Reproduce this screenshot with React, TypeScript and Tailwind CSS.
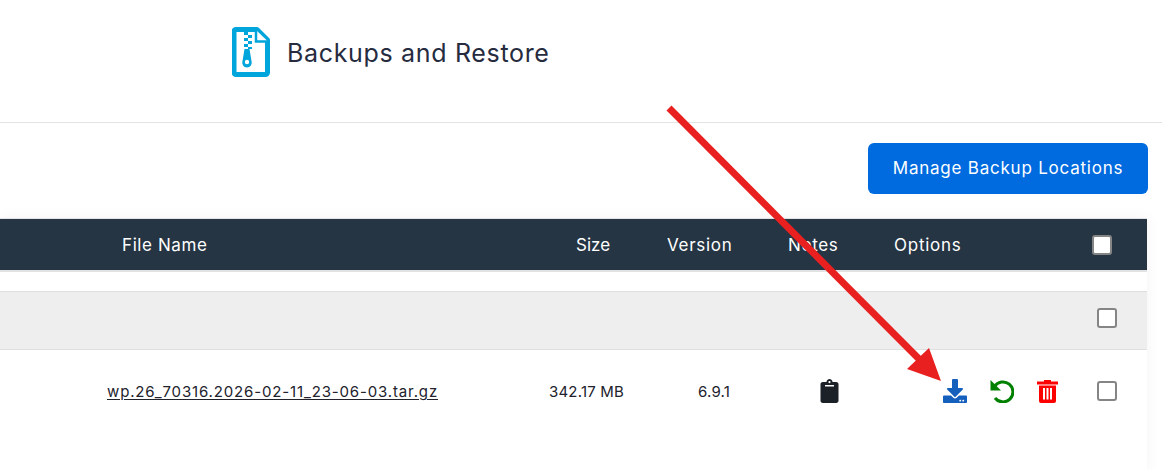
import { FaClipboard, FaDownload } from "react-icons/fa";

function ZipIcon() {
  return (
    <svg width="38" height="50" viewBox="0 0 38 50" className="shrink-0">
      <path d="M4 2.500H25L35.500 13V45.500a2 2 0 0 1-2 2H4a2 2 0 0 1-2-2V4.500a2 2 0 0 1 2-2Z" fill="#fff" stroke="#00a5dc" strokeWidth="5" strokeLinejoin="round" />
      <path d="M24 3V14.500H36" fill="#fff" stroke="#00a5dc" strokeWidth="2.500" />
      <path d="M12 5h4v3h-4zM16 8h4v3h-4zM12 11h4v3h-4zM16 14h4v3h-4zM12 17h4v3h-4zM16 20h4v2h-4z" fill="#00a5dc" />
      <path d="M12.500 22h5l2 12a4.800 4.800 0 1 1-9 0Z" fill="#00a5dc" />
      <circle cx="15" cy="35" r="2.200" fill="#fff" />
    </svg>
  );
}

function UndoIcon() {
  return (
    <svg width="24" height="24" viewBox="0 0 24 24" className="shrink-0">
      <path d="M4.500 7.500A10 10 0 1 1 5 19" fill="none" stroke="#008000" strokeWidth="3" />
      <path d="M0.500 1V11.500H11Z" fill="#008000" />
    </svg>
  );
}

function TrashIcon() {
  return (
    <svg width="21" height="24" viewBox="0 0 21 24" className="shrink-0">
      <path d="M7 1h7v2H7z" fill="#ff0000" />
      <path d="M0 2.500h21v3H0z" fill="#ff0000" />
      <path d="M2 6.500h17V22a2 2 0 0 1-2 2H4a2 2 0 0 1-2-2Z" fill="#ff0000" />
      <path d="M6 9h2v11.500H6zM9.500 9h2v11.500h-2zM13 9h2v11.500h-2z" fill="#fff" />
    </svg>
  );
}

function Box() {
  return <span className="block size-[20px] rounded-[3px] border-2 border-[#858585] bg-white" />;
}

export default function App() {
  return (
    <div className="relative h-[470px] w-[1162px] overflow-hidden bg-white font-['Inter',sans-serif] text-[#21222c]">
      <header className="flex h-[123px] items-start gap-[17px] border-b border-[#e3e3e3] pl-[232px] pt-[27px]">
        <ZipIcon />
        <h1 className="mt-[9px] text-[25px] leading-[34px] font-normal tracking-[0.67px] text-[#262b40]">Backups and Restore</h1>
      </header>

      <div className="flex justify-end pr-[14px] pt-[20px]">
        <button className="h-[51px] w-[280px] rounded-[6px] bg-[#006bdf] text-[17px] font-normal tracking-[0.77px] text-white">Manage Backup Locations</button>
      </div>

      <div className="mt-[24px] w-[1147px] shadow-[0_0_15px_rgba(0,0,0,0.05)]">
        <div className="grid h-[54px] grid-cols-[576px_91px_121px_106px_198px_1fr] items-center border-t border-b-2 border-t-[#e2e2e2] border-b-[#e2e2e2] bg-[#253544] text-[17px] tracking-[0.6px] text-white">
          <span className="pl-[122px] pt-[2px]">File Name</span>
          <span className="pt-[2px] tracking-[0px]">Size</span>
          <span className="pt-[2px] tracking-[0.7px]">Version</span>
          <span className="pt-[2px]">Notes</span>
          <span className="pt-[2px] tracking-[0.75px]">Options</span>
          <Box />
        </div>
        <div className="h-[20px] border-b border-[#e0e0e0] bg-white" />
        <div className="flex h-[58px] items-start justify-end border-b border-[#e0e0e0] bg-[#eeeeee] pr-[30px] pt-[16px]">
          <Box />
        </div>
        <div className="grid h-[120px] grid-cols-[549px_149px_122px_123px_154px_1fr] items-start bg-white pt-[29px] text-[15px] leading-[24px] tracking-[0.2px] text-[#21222c]">
          <a className="pl-[107px] pt-[1px] underline underline-offset-2 tracking-[0.85px]">wp.26_70316.2026-02-11_23-06-03.tar.gz</a>
          <span className="pt-[1px]">342.17 MB</span>
          <span className="pt-[1px]">6.9.1</span>
          <FaClipboard className="h-[24px] w-[19px] text-[#1c2127]" />
          <span className="flex items-center gap-[23px]">
            <FaDownload className="size-[24px] text-[#1560bd]" />
            <UndoIcon />
            <TrashIcon />
          </span>
          <span className="mt-[2px]"><Box /></span>
        </div>
      </div>

      <svg className="pointer-events-none absolute left-0 top-0" width="1162" height="470">
        <line x1="669" y1="108" x2="925" y2="365" stroke="#e82020" strokeWidth="7" />
        <polygon points="941,381 907,369 929,348" fill="#e82020" />
      </svg>
    </div>
  );
}
